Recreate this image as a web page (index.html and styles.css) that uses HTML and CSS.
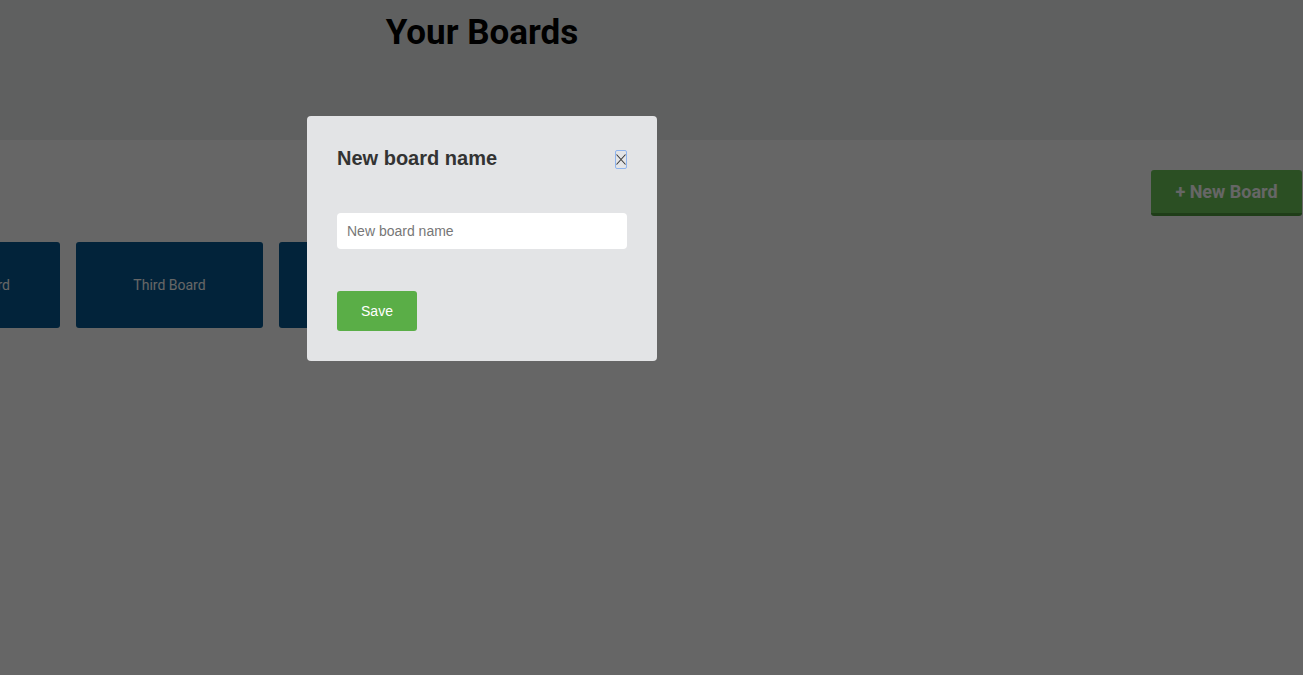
FILE: index.html
```html
<!DOCTYPE html>
<html>
<head>
<meta charset="utf-8">
<title>Your Boards</title>
<link rel="stylesheet" href="styles.css">
</head>
<body>
<header class="header">
  <div class="header-inner">
    <h1 class="title">Your Boards</h1>
  </div>
</header>
<main class="main">
  <div class="toolbar">
    <button class="new-board">+ New Board</button>
  </div>
  <div class="boards">
    <div class="board">Second Board</div>
    <div class="board">Third Board</div>
    <div class="board">Fourth Board</div>
  </div>
</main>
<div class="overlay">
  <div class="modal-area">
    <div class="modal">
      <div class="modal-head">
        <h2 class="modal-title">New board name</h2>
        <button class="close" aria-label="Close">
          <svg width="10" height="11" viewBox="0 0 10 11"><path d="M0.5 0.5L9.5 10.5M9.5 0.5L0.5 10.5" stroke="#3a3a3a" stroke-width="1.1" fill="none"/></svg>
        </button>
      </div>
      <input class="name-input" type="text" placeholder="New board name">
      <button class="save">Save</button>
    </div>
  </div>
</div>
</body>
</html>
```
FILE: styles.css
```css
html, body {
  margin: 0;
  padding: 0;
}
body {
  background: #ffffff;
  font-family: Roboto, "Liberation Sans", sans-serif;
  overflow: hidden;
  height: 675px;
}
.header {
  background: #eef0f0;
  height: 140px;
}
.header-inner {
  width: 964px;
  text-align: center;
  padding-top: 13px;
}
.title {
  margin: 0;
  font-size: 35px;
  font-weight: 700;
  color: #000;
  line-height: 40px;
}
.toolbar {
  display: flex;
  justify-content: flex-end;
  padding-top: 30px;
  padding-right: 1px;
}
.new-board {
  width: 151px;
  height: 46px;
  background: #6dc658;
  border: none;
  border-bottom: 3px solid #4f9a3e;
  border-radius: 3px;
  color: #fff;
  font-family: Roboto, sans-serif;
  font-weight: 700;
  font-size: 18px;
  padding: 0;
}
.boards {
  display: flex;
  gap: 16px;
  margin-top: 26px;
  margin-left: -127px;
}
.board {
  flex: 0 0 187px;
  height: 86px;
  background: #055891;
  border-radius: 3px;
  color: #fff;
  font-size: 14px;
  display: flex;
  align-items: center;
  justify-content: center;
}
.overlay {
  position: fixed;
  inset: 0;
  background: rgba(0, 0, 0, 0.6);
}
.modal-area {
  width: 964px;
  display: flex;
  justify-content: center;
  padding-top: 116px;
}
.modal {
  width: 350px;
  height: 245px;
  box-sizing: border-box;
  background: #e3e4e6;
  border-radius: 4px;
  padding: 30px 30px;
  display: flex;
  flex-direction: column;
  align-items: flex-start;
}
.modal-head {
  width: 100%;
  display: flex;
  justify-content: space-between;
  align-items: center;
  height: 24px;
}
.modal-title {
  margin: 0;
  font-family: "Liberation Sans", Arial, sans-serif;
  font-size: 20px;
  font-weight: 700;
  color: #333;
}
.close {
  width: 12px;
  height: 19px;
  padding: 0;
  background: transparent;
  border: 1.5px solid #8fb4ee;
  border-radius: 2px;
  display: flex;
  align-items: center;
  justify-content: center;
  margin-top: 2px;
}
.name-input {
  margin-top: 43px;
  width: 290px;
  height: 36px;
  box-sizing: border-box;
  border: none;
  border-radius: 4px;
  background: #fff;
  padding: 0 10px;
  font-family: "Liberation Sans", Arial, sans-serif;
  font-size: 14px;
  color: #333;
}
.name-input::placeholder {
  color: #777;
}
.save {
  margin-top: 42px;
  width: 80px;
  height: 40px;
  border: none;
  border-radius: 3px;
  background: #5aae47;
  color: #fff;
  font-family: "Liberation Sans", Arial, sans-serif;
  font-size: 14px;
  padding: 0;
}
```
